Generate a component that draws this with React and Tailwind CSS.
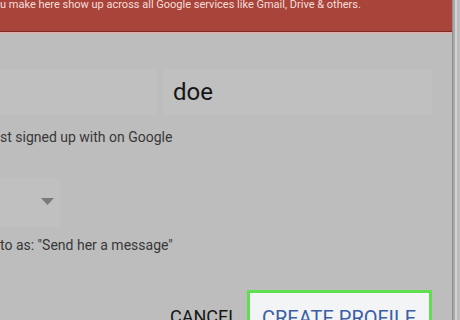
import React from "react";

const App = () => {
  return (
    <div className="w-[460px] h-[320px] overflow-hidden flex bg-[#bdbdbd] font-['Roboto',sans-serif]">
      <div className="w-[452px] self-start flex flex-col">
        {/* red banner */}
        <div className="h-[31px] bg-[#a9443a] overflow-hidden">
          <p className="mt-[-1px] text-[11px] leading-[11px] text-[#f5dfdb] whitespace-nowrap">
            u make here show up across all Google services like Gmail, Drive &amp; others.
          </p>
        </div>
        <div className="h-[1px] bg-[#7d2c24]" />
        <div className="h-[2px] bg-[#d6b1ad]" />

        {/* name fields */}
        <div className="mt-[35px] flex gap-[6px]">
          <div className="w-[157px] h-[46px] bg-[#c0c0c0]" />
          <div className="w-[269px] h-[46px] bg-[#c0c0c0] pl-[10px] pt-[11px]">
            <span className="text-[24px] leading-[24px] text-[#151515]">doe</span>
          </div>
        </div>

        <p className="mt-[12px] text-[14px] leading-[20px] text-[#383838] whitespace-nowrap">
          st signed up with on Google
        </p>

        {/* pronoun dropdown */}
        <div className="mt-[31px] w-[60px] h-[49px] bg-[#c0c0c0] flex items-center justify-end pr-[6px]">
          <svg width="13" height="7" viewBox="0 0 13 7" className="mb-[3px]">
            <path d="M0 0 L13 0 L6.5 7 Z" fill="#7a7a7a" />
          </svg>
        </div>

        <p className="mt-[8px] text-[14px] leading-[20px] text-[#383838] whitespace-nowrap">
          to as: "Send her a message"
        </p>

        {/* actions */}
        <div className="mt-[35px] flex justify-end items-start gap-[9px] pr-[20px]">
          <span className="mt-[18px] text-[18px] leading-[18px] text-[#161616]">CANCEL</span>
          <div className="w-[185px] h-[44px] border-[3px] border-[#5fe04f] bg-[#f3f4f6] pl-[12px] pt-[15px]">
            <span className="block text-[20px] leading-[20px] text-[#3b5ea6] whitespace-nowrap">
              CREATE PROFILE
            </span>
          </div>
        </div>
      </div>

      {/* dialog edge */}
      <div className="w-[8px] flex">
        <div className="w-[1px] bg-[#8e8e8e]" />
        <div className="w-[2px] bg-[#a8a8a8]" />
        <div className="w-[2px] bg-[#d3d3d3]" />
        <div className="w-[3px] bg-[#bcbcbc]" />
      </div>
    </div>
  );
};

export default App;
